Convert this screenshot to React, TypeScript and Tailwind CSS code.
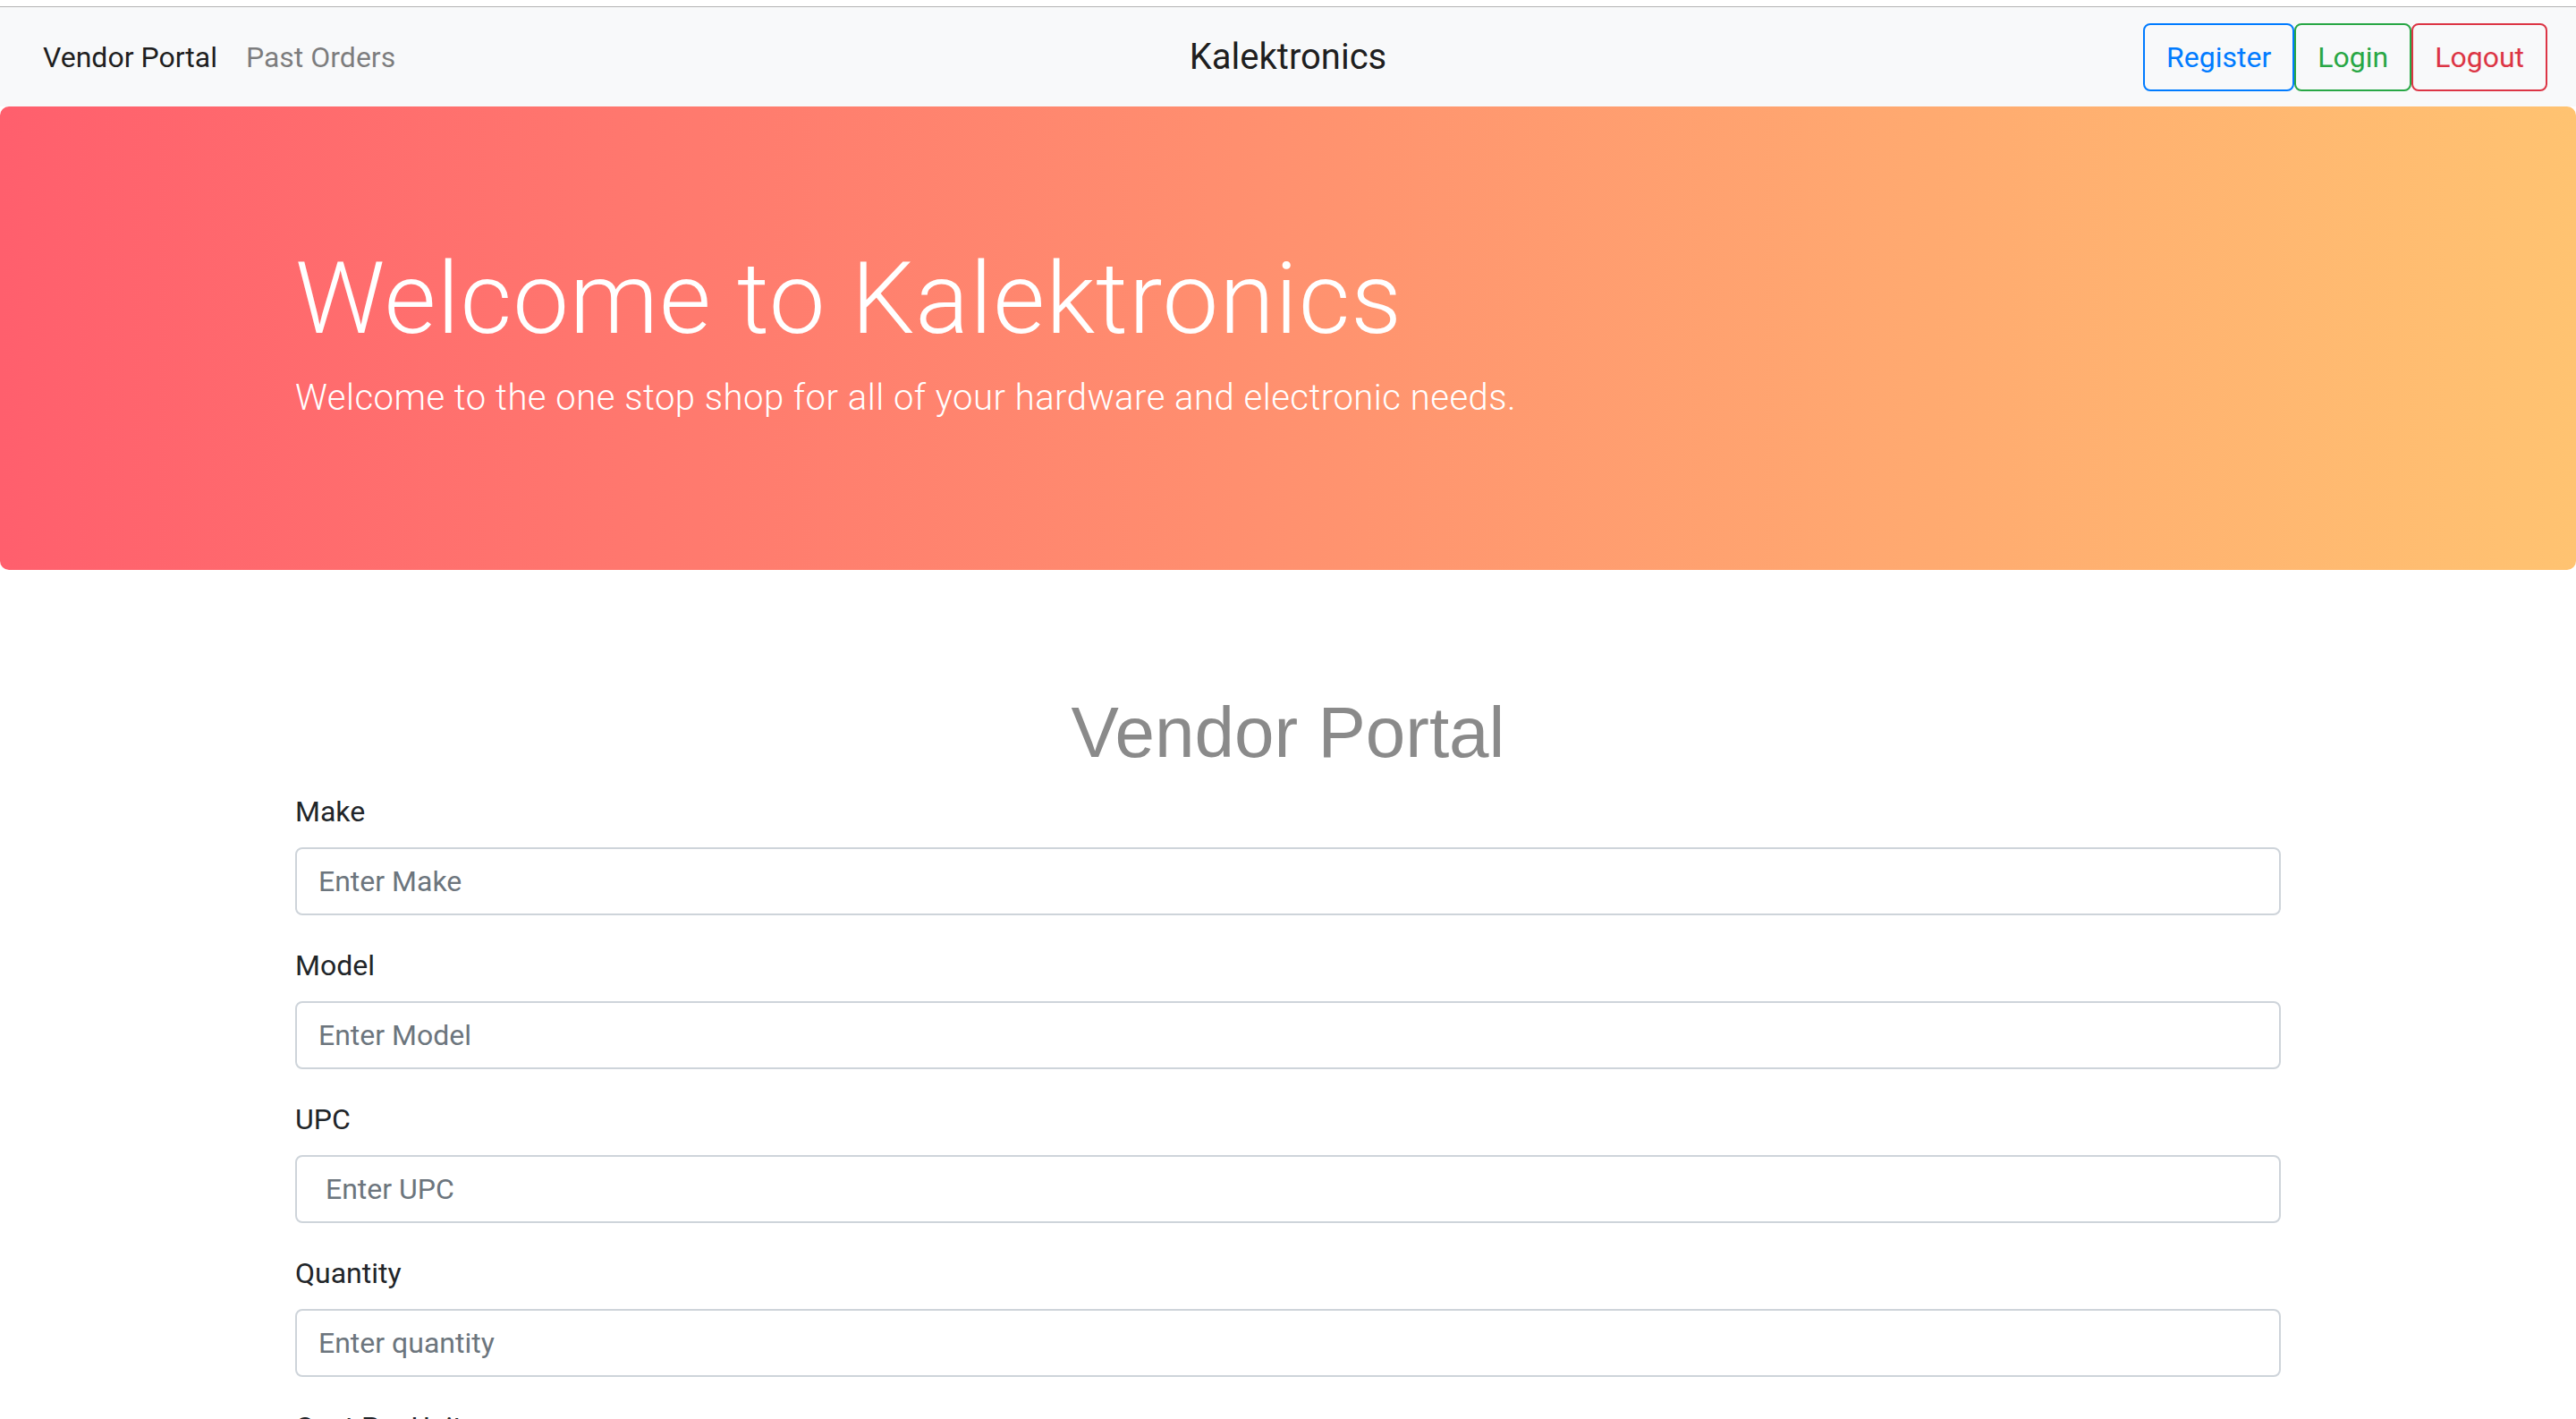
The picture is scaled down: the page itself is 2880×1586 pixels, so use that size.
import { useState } from 'react'

const fields = [
  { id: 'make', label: 'Make', placeholder: 'Enter Make' },
  { id: 'model', label: 'Model', placeholder: 'Enter Model' },
  { id: 'upc', label: 'UPC', placeholder: ' Enter UPC' },
  { id: 'quantity', label: 'Quantity', placeholder: 'Enter quantity' },
  { id: 'cost', label: 'Cost Per Unit', placeholder: 'Enter cost per unit' },
]

function Navbar() {
  return (
    <nav className="grid h-[111px] grid-cols-[1fr_auto_1fr] items-center bg-[#f8f9fa] px-8">
      <div className="flex items-center text-[32px] leading-[48px]">
        <a className="px-4 text-black/90" href="#">
          Vendor Portal
        </a>
        <a className="px-4 text-black/50" href="#">
          Past Orders
        </a>
      </div>
      <div className="text-[40px] leading-[60px] text-black/90">Kalektronics</div>
      <div className="flex justify-end">
        <button className="h-[76px] rounded-[8px] border-2 border-[#007bff] px-6 text-[32px] text-[#007bff]">
          Register
        </button>
        <button className="h-[76px] rounded-[8px] border-2 border-[#28a745] px-6 text-[32px] text-[#28a745]">
          Login
        </button>
        <button className="h-[76px] rounded-[8px] border-2 border-[#dc3545] px-6 text-[32px] text-[#dc3545]">
          Logout
        </button>
      </div>
    </nav>
  )
}

export default function App() {
  const [values, setValues] = useState<Record<string, string>>({})

  return (
    <div className="min-h-screen bg-white font-['Roboto',sans-serif] text-[#212529]">
      {/* browser chrome line */}
      <div className="h-[8px] border-b border-[#b4b4b4] bg-white" />
      <Navbar />

      {/* Hero */}
      <div className="h-[518px] rounded-[10px] bg-[linear-gradient(to_right,#ff5f6d,#ffc371)] pt-[148px]">
        <div className="mx-auto w-[2280px] px-[30px] text-white">
          <h1 className="mb-[14px] text-[112px] font-light leading-[1.2] tracking-[0.9px]">
            Welcome to Kalektronics
          </h1>
          <p className="text-[40px] font-light leading-[1.5] tracking-[0.5px]">
            Welcome to the one stop shop for all of your hardware and electronic needs.
          </p>
        </div>
      </div>

      {/* Form */}
      <div className="mx-auto mt-[134px] w-[2280px] px-[30px] pb-32">
        <h2 className="mb-4 text-center font-['Liberation_Sans',Arial,sans-serif] text-[80px] leading-[1.2] text-[#8a8a8a]">
          Vendor Portal
        </h2>
        <form onSubmit={(e) => e.preventDefault()}>
          {fields.map((field) => (
            <div key={field.id} className="mb-8">
              <label htmlFor={field.id} className="mb-4 block text-[32px] leading-[48px]">
                {field.label}
              </label>
              <input
                id={field.id}
                value={values[field.id] ?? ''}
                onChange={(e) => setValues({ ...values, [field.id]: e.target.value })}
                placeholder={field.placeholder}
                className="block h-[76px] w-full rounded-[8px] border-2 border-[#ced4da] bg-white px-6 text-[32px] text-[#495057] outline-none placeholder:text-[#6c757d]"
              />
            </div>
          ))}
          <button className="h-[76px] rounded-[8px] border-2 border-[#007bff] bg-[#007bff] px-6 text-[32px] text-white">
            Submit
          </button>
        </form>
      </div>
    </div>
  )
}
